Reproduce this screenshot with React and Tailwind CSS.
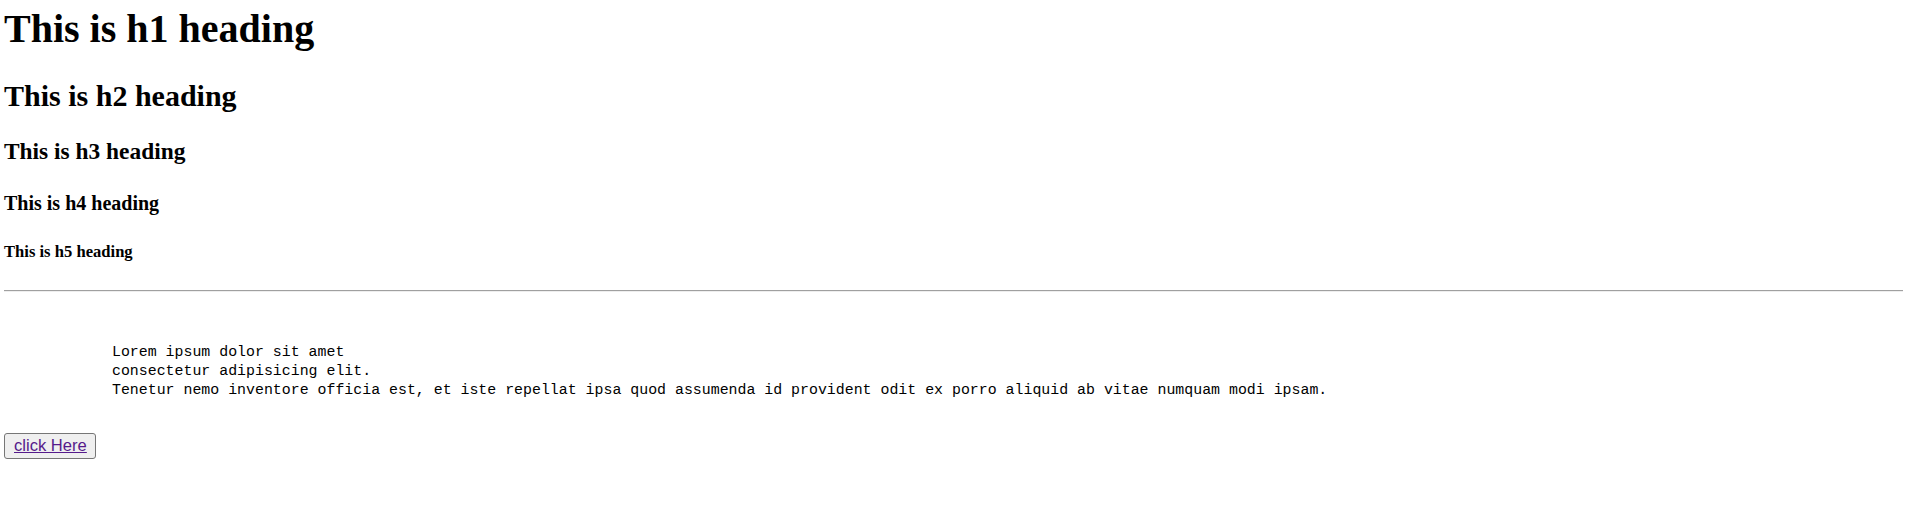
import React from 'react';

const App = () => {
  // lineas del bloque preformateado
  const lines = [
    "Lorem ipsum dolor sit amet",
    "consectetur adipisicing elit.",
    "Tenetur nemo inventore officia est, et iste repellat ipsa quod assumenda id provident odit ex porro aliquid ab vitae numquam modi ipsam.",
  ];

  return (
    <div className="min-h-screen bg-white pl-1 pr-[10px] pt-[6px] text-black font-['Liberation_Serif','Times_New_Roman',serif]">
      <h1 className="text-[40px] leading-[1.149] font-bold mb-[26.8px]">This is h1 heading</h1>
      <h2 className="text-[30px] leading-[1.149] font-bold my-[24.9px]">This is h2 heading</h2>
      <h3 className="text-[23.4px] leading-[1.149] font-bold my-[23.4px]">This is h3 heading</h3>
      <h4 className="text-[20px] leading-[1.149] font-bold my-[26.6px]">This is h4 heading</h4>
      <h5 className="text-[16.6px] leading-[1.149] font-bold mt-[27.7px]">This is h5 heading</h5>

      <hr className="mt-[29px] h-0 border-t border-b border-t-[#a0a0a0] border-b-[#eeeeee]" />

      {/* bloque pre */}
      <pre className="mt-[51px] pl-[108px] text-[14.9px] leading-[19px] font-['Liberation_Mono','Courier_New',monospace] whitespace-pre">
        {lines.join("\n")}
      </pre>

      <button className="mt-[33px] inline-flex items-center h-[26px] w-[92px] pl-[9px] bg-[#efefef] border border-[#767676] rounded-[3px]">
        <a href="#" className="text-[16.6px] leading-none text-[#551a8b] underline font-['Liberation_Sans',Arial,sans-serif]">click Here</a>
      </button>
    </div>
  );
};

export default App;
